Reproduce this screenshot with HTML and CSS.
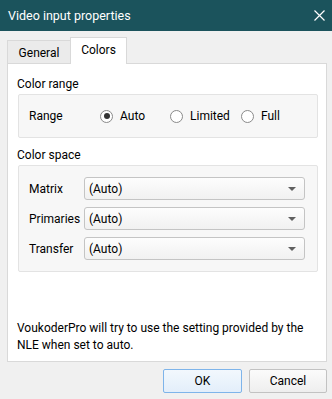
FILE: index.html
```html
<!DOCTYPE html>
<html lang="en">
<head>
  <meta charset="UTF-8">
  <meta name="viewport" content="width=device-width, initial-scale=1.0">
  <title>Video input properties</title>
  <link rel="stylesheet" href="styles.css">
</head>
<body>
  <div class="titlebar">
    <span class="titulo">Video input properties</span>
    <svg class="cerrar" width="11" height="11" viewBox="0 0 11 11">
      <path d="M0.5 0.5 L10.5 10.5 M10.5 0.5 L0.5 10.5" stroke="#fff" stroke-width="1.2" fill="none"/>
    </svg>
  </div>

  <div class="contenido">
    <div class="tabs">
      <div class="tab">General</div>
      <div class="tab activa">Colors</div>
    </div>

    <div class="pane">
      <div class="seccion">Color range</div>
      <div class="grupo fila-rango">
        <span class="etiqueta">Range</span>
        <label class="radio r-auto"><span class="circulo marcado"></span>Auto</label>
        <label class="radio r-limited"><span class="circulo"></span>Limited</label>
        <label class="radio"><span class="circulo"></span>Full</label>
      </div>

      <div class="seccion espacio">Color space</div>
      <div class="grupo combos">
        <div class="fila">
          <span class="etiqueta corta">Matrix</span>
          <div class="combo">(Auto)<span class="flecha"></span></div>
        </div>
        <div class="fila">
          <span class="etiqueta corta">Primaries</span>
          <div class="combo">(Auto)<span class="flecha"></span></div>
        </div>
        <div class="fila">
          <span class="etiqueta corta">Transfer</span>
          <div class="combo">(Auto)<span class="flecha"></span></div>
        </div>
      </div>

      <p class="nota">VoukoderPro will try to use the setting provided by the NLE when set to auto.</p>
    </div>

    <div class="botones">
      <button class="btn btn-ok">OK</button>
      <button class="btn">Cancel</button>
    </div>
  </div>
</body>
</html>
```

FILE: styles.css
```css
body {
  margin: 0;
  padding: 0;
  width: 332px;
  height: 399px;
  background-color: #f0f0f0;
  font-family: Roboto, "Noto Sans", sans-serif;
  font-size: 12px;
  color: #000;
  overflow: hidden;
}
.titlebar {
  height: 31px;
  background-color: #1b535c;
  color: #fff;
  display: flex;
  align-items: center;
  justify-content: space-between;
  padding: 0 7px 0 8px;
  font-size: 12.5px;
}
.cerrar {
  display: block;
}
.contenido {
  padding: 6px 5px 0 7px;
}
.tabs {
  display: flex;
  align-items: flex-end;
  height: 26px;
}
.tab {
  box-sizing: border-box;
  height: 23px;
  width: 64px;
  border: 1px solid #d9d9d9;
  border-bottom: none;
  background-color: #ebebeb;
  text-align: center;
  line-height: 24px;
}
.tab.activa {
  height: 27px;
  width: 57px;
  margin-left: -1px;
  margin-bottom: -1px;
  background-color: #fff;
  line-height: 24px;
  position: relative;
}
.pane {
  box-sizing: border-box;
  height: 299px;
  border: 1px solid #d9d9d9;
  background-color: #fff;
  padding: 12px 8px 7px 10px;
  display: flex;
  flex-direction: column;
}
.seccion {
  line-height: 17px;
  margin-left: -1px;
}
.seccion.espacio {
  margin-top: 9px;
}
.grupo {
  margin-top: 1px;
  border: 1px solid #e3e3e3;
  border-radius: 2px;
  background-color: #f7f7f7;
  padding: 0 12px 0 10px;
}
.fila-rango {
  height: 42px;
  display: flex;
  align-items: center;
}
.etiqueta {
  width: 71px;
}
.etiqueta.corta {
  width: 55px;
}
.radio {
  display: flex;
  align-items: center;
  gap: 7px;
}
.r-auto {
  width: 70px;
}
.r-limited {
  width: 71px;
}
.circulo {
  box-sizing: border-box;
  width: 13px;
  height: 13px;
  border: 1px solid #8a8a8a;
  border-radius: 50%;
  background-color: #fff;
  display: flex;
  align-items: center;
  justify-content: center;
}
.circulo.marcado::after {
  content: "";
  width: 6px;
  height: 6px;
  border-radius: 50%;
  background-color: #333;
}
.combos {
  padding-top: 11px;
  padding-bottom: 11px;
  display: flex;
  flex-direction: column;
  gap: 7px;
}
.fila {
  display: flex;
  align-items: center;
}
.combo {
  box-sizing: border-box;
  flex: 1;
  height: 23px;
  border: 1px solid #c4c4c4;
  border-radius: 3px;
  background: linear-gradient(#fdfdfd, #f1f1f1);
  padding-left: 4px;
  display: flex;
  align-items: center;
  justify-content: space-between;
  padding-right: 8px;
}
.flecha {
  width: 0;
  height: 0;
  border-left: 4px solid transparent;
  border-right: 4px solid transparent;
  border-top: 4px solid #606060;
}
.nota {
  margin: auto 0 0 -1px;
  line-height: 17px;
}
.botones {
  display: flex;
  justify-content: flex-end;
  gap: 7px;
  margin-top: 7px;
}
.btn {
  box-sizing: border-box;
  width: 78px;
  height: 24px;
  border: 1px solid #c2c2c2;
  border-radius: 2px;
  background: linear-gradient(#fbfbfb, #eeeeee);
  font-family: Roboto, "Noto Sans", sans-serif;
  font-size: 12px;
  color: #000;
  padding: 0;
}
.btn-ok {
  width: 79px;
  border-color: #7eb4ea;
  background: linear-gradient(#f2f8fd, #e3eefa);
}
```
